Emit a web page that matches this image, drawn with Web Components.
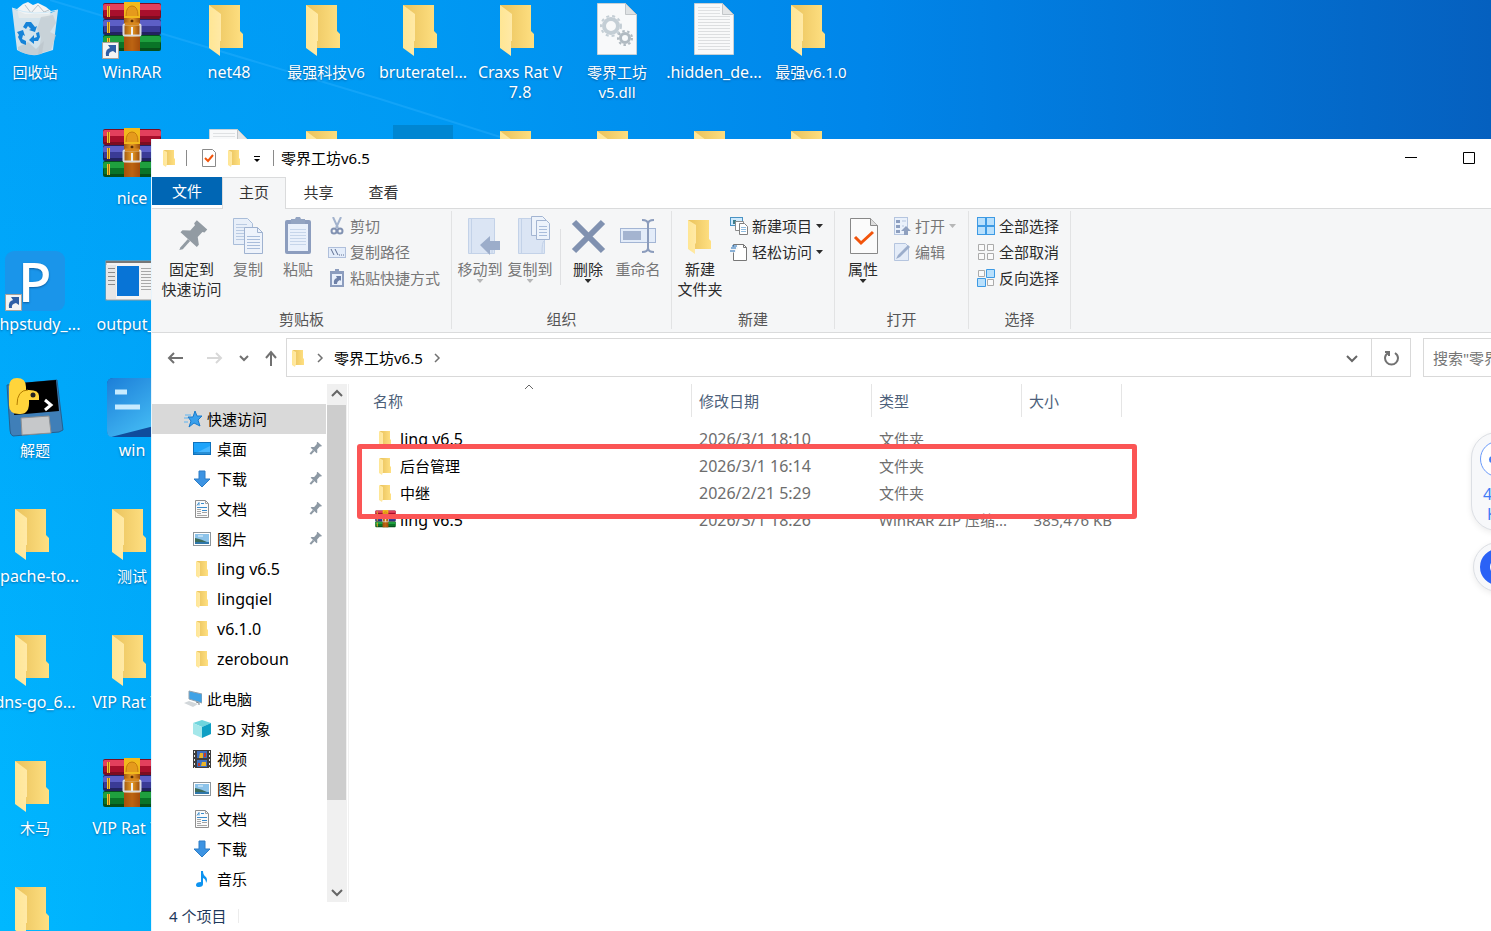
<!DOCTYPE html>
<html lang="zh-CN">
<head>
<meta charset="utf-8">
<title>零界工坊v6.5</title>
<style>
    html, body {
        height: 100%;
        margin: 0;
    }

    body {
        font: 15px/20px "Noto Sans", "Noto Sans CJK SC", sans-serif;
        color: #000;
        overflow: hidden;
    }
</style>
</head>
<body>
<desk-top>
    <desk-icon icon="recycle">回收站</desk-icon>
    <desk-icon icon="winrar" shortcut latin>WinRAR</desk-icon>
    <desk-icon icon="folder" latin>net48</desk-icon>
    <desk-icon icon="folder">最强科技V6</desk-icon>
    <desk-icon icon="folder" latin>bruteratel...</desk-icon>
    <desk-icon icon="folder" latin>Craxs Rat V<br>7.8</desk-icon>
    <desk-icon icon="dll">零界工坊<br>v5.dll</desk-icon>
    <desk-icon icon="text" latin>.hidden_de...</desk-icon>
    <desk-icon icon="folder">最强v6.1.0</desk-icon>

    <desk-icon></desk-icon>
    <desk-icon icon="winrar" latin>nice</desk-icon>
    <desk-icon icon="text"></desk-icon>
    <desk-icon icon="folder"></desk-icon>
    <desk-icon selected></desk-icon>
    <desk-icon icon="folder"></desk-icon>
    <desk-icon icon="folder"></desk-icon>
    <desk-icon icon="folder"></desk-icon>
    <desk-icon icon="folder"></desk-icon>

    <desk-icon icon="phpstudy" shortcut latin first>phpstudy_...</desk-icon>
    <desk-icon icon="output" latin>output_...</desk-icon>
    <desk-icon icon="python" first>解题</desk-icon>
    <desk-icon icon="win" latin>win</desk-icon>
    <desk-icon icon="folder" latin first>apache-to...</desk-icon>
    <desk-icon icon="folder">测试</desk-icon>
    <desk-icon icon="folder" latin first>dns-go_6...</desk-icon>
    <desk-icon icon="folder" latin>VIP Rat 7...</desk-icon>
    <desk-icon icon="folder" first>木马</desk-icon>
    <desk-icon icon="winrar" latin>VIP Rat 7...</desk-icon>
    <desk-icon icon="folder" first></desk-icon>

    <explorer-window slot="window">
        <title-bar slot="title">零界工坊v6.5</title-bar>
        <ribbon-tabs slot="title"></ribbon-tabs>
        <ribbon-bar slot="ribbon">
            <ribbon-group label="剪贴板" style="--w: 300px; --pad: 8px">
                <ribbon-button big icon="pin" wide>固定到<br>快速访问</ribbon-button>
                <ribbon-button big icon="copy" off>复制</ribbon-button>
                <ribbon-button big icon="paste" off>粘贴</ribbon-button>
                <ribbon-stack>
                    <ribbon-button icon="cut" off>剪切</ribbon-button>
                    <ribbon-button icon="path" off>复制路径</ribbon-button>
                    <ribbon-button icon="pastelink" off>粘贴快捷方式</ribbon-button>
                </ribbon-stack>
            </ribbon-group>
            <ribbon-group label="组织" style="--w: 220px">
                <ribbon-button big icon="moveto" off drop>移动到</ribbon-button>
                <ribbon-button big icon="copyto" off drop>复制到</ribbon-button>
                <ribbon-line></ribbon-line>
                <ribbon-button big icon="delete" drop>删除</ribbon-button>
                <ribbon-button big icon="rename" off>重命名</ribbon-button>
            </ribbon-group>
            <ribbon-group label="新建" style="--w: 163px">
                <ribbon-button big icon="bigfolder">新建<br>文件夹</ribbon-button>
                <ribbon-stack>
                    <ribbon-button icon="newitem" drop>新建项目</ribbon-button>
                    <ribbon-button icon="easy" drop>轻松访问</ribbon-button>
                </ribbon-stack>
            </ribbon-group>
            <ribbon-group label="打开" style="--w: 134px">
                <ribbon-button big icon="props" drop>属性</ribbon-button>
                <ribbon-stack>
                    <ribbon-button icon="open" off drop>打开</ribbon-button>
                    <ribbon-button icon="edit" off>编辑</ribbon-button>
                </ribbon-stack>
            </ribbon-group>
            <ribbon-group label="选择" style="--w: 102px">
                <ribbon-stack>
                    <ribbon-button icon="selall">全部选择</ribbon-button>
                    <ribbon-button icon="selnone">全部取消</ribbon-button>
                    <ribbon-button icon="selinv">反向选择</ribbon-button>
                </ribbon-stack>
            </ribbon-group>
        </ribbon-bar>
        <address-bar slot="address" path="零界工坊v6.5"></address-bar>
        <nav-tree slot="nav">
            <nav-item icon="star" root selected>快速访问</nav-item>
            <nav-item icon="desktop" pinned>桌面</nav-item>
            <nav-item icon="download" pinned>下载</nav-item>
            <nav-item icon="doc" pinned>文档</nav-item>
            <nav-item icon="picture" pinned>图片</nav-item>
            <nav-item icon="smallfolder" latin>ling v6.5</nav-item>
            <nav-item icon="smallfolder" latin>lingqiel</nav-item>
            <nav-item icon="smallfolder" latin>v6.1.0</nav-item>
            <nav-item icon="smallfolder" latin>zeroboun</nav-item>
            <nav-item icon="pc" root spaced>此电脑</nav-item>
            <nav-item icon="cube">3D 对象</nav-item>
            <nav-item icon="video">视频</nav-item>
            <nav-item icon="picture">图片</nav-item>
            <nav-item icon="doc">文档</nav-item>
            <nav-item icon="download">下载</nav-item>
            <nav-item icon="music">音乐</nav-item>
        </nav-tree>
        <file-list slot="files"></file-list>
        <span slot="status">4 个项目</span>
    </explorer-window>

    <side-widget slot="widget"></side-widget>
</desk-top>

<script>
const BOOK = (y, a, b, c) => `
    <rect x="1" y="${y}" width="58" height="16" rx="2" fill="${c}"/>
    <rect x="1" y="${y + 1}" width="58" height="7" rx="2" fill="${a}"/>
    <rect x="2" y="${y + 7}" width="56" height="6" fill="${b}"/>
    <rect x="5" y="${y + 3}" width="3" height="11" fill="#f5c52e"/>
    <rect x="6" y="${y + 3}" width="1" height="11" fill="#a86a10"/>`;

const FOLDER_GRADS = `
    <linearGradient id="fb"><stop offset="0" stop-color="#e9c25c"/><stop offset="1" stop-color="#ffe082"/></linearGradient>
    <linearGradient id="ff"><stop offset="0" stop-color="#ffe694"/><stop offset="1" stop-color="#ffe9a6"/></linearGradient>`;

const PAGE_LINES = (x, y, w, n, step, color) =>
    Array.from({ length: n }, (_, i) => `<path d="M${x} ${y + i * step}h${w}" stroke="${color}"/>`).join('');

// name: [viewBox size, markup]
const ICONS = {
    folder: [60, `${FOLDER_GRADS}
        <path d="M10 6h31v26l3 3v14H21z" fill="url(#fb)"/>
        <path d="M10 6l12 9v27h-1v15l-11-8z" fill="url(#ff)"/>`],
    bigfolder: [40, `${FOLDER_GRADS}
        <path d="M8 4h21v19l2 2v8H15z" fill="url(#fb)"/>
        <path d="M8 4l8 5v18l-1 1v10l-7-5z" fill="url(#ff)"/>`],
    smallfolder: [18, `${FOLDER_GRADS}
        <path d="M4 1h10v8l1 1v6H6z" fill="url(#fb)"/>
        <path d="M3 1l4 2v12l-1 3-3-2z" fill="url(#ff)"/>`],
    winrar: [60, `
        ${BOOK(4, '#e2405c', '#a80f2c', '#7c0c20')}
        ${BOOK(20, '#5d5fc6', '#3a3b96', '#22235f')}
        ${BOOK(36, '#1fa03e', '#0a7427', '#064f1a')}
        <linearGradient id="st"><stop offset="0" stop-color="#a35a10"/><stop offset=".5" stop-color="#e89b25"/><stop offset="1" stop-color="#9b4c0c"/></linearGradient>
        <rect x="22" y="3" width="16" height="16" fill="#f2b91c"/>
        <path d="M24 17q0-10 6-10t6 10" fill="#e59a1c" stroke="#c57a0c"/>
        <rect x="22" y="19" width="16" height="33" fill="url(#st)"/>
        <path d="M22 38h16v14H22z" fill="#a94d0b" opacity=".7"/>
        <circle cx="30" cy="22" r="1.500" fill="#5b2b06"/>
        <rect x="21.500" y="25.500" width="17" height="11" rx="1" fill="none" stroke="#d9d9de" stroke-width="2"/>
        <path d="M23 25h14" stroke="#d8871d" stroke-width="3"/>
        <path d="M30 28v8" stroke="#f0f0f0" stroke-width="2"/>`],
    recycle: [60, `
        <path d="M12 10l6-5 5-2 5 3 5-2 8 4 5 4-2 7H14z" fill="#f2f4f5"/>
        <path d="M20 6l6 8 7-8 6 7 5-2" fill="none" stroke="#b9c2c8"/>
        <path d="M7 9l5 42q10 6 20 5l16-5 5-40-10 4H20z" fill="#e3e8eb" opacity=".93"/>
        <path d="M36 18l12-2 3 8-6 9 6 3-5 15-13 4 3-16-4-9z" fill="#c4ccd1" opacity=".75"/>
        <path d="M13 48l10-5 8 7 8-8-2 13-7 1q-10 0-17-5z" fill="#b9c2c8" opacity=".6"/>
        <path d="M7 9q22 9 46 2" fill="none" stroke="#cfe9f7"/>
        <g fill="#1583d8"><path d="M18 28l3-5h5l4 5 2-1-2 6-6-2 2-1-3-3-2 3zM12 33l6-2 2 6-2-1-1 4 4 2v4l-5-2-3-6 1-2zM24 41l5-5v3l3-1-1-4 3-1 1 5-2 4h-4v3z"/></g>`],
    dll: [60, `
        <path d="M10.500 4.500h28l11 11v40h-39z" fill="#f8f9fa" stroke="#c6d0d6"/>
        <path d="M38.500 4.500v11h11z" fill="#dfe2e4" stroke="#c2c6c9"/>
        <circle cx="24" cy="27" r="7" fill="none" stroke="#c4ced5" stroke-width="4"/>
        <circle cx="24" cy="27" r="10" fill="none" stroke="#c4ced5" stroke-width="2" stroke-dasharray="3 3"/>
        <circle cx="38" cy="39" r="4.500" fill="none" stroke="#b1bac1" stroke-width="3"/>
        <circle cx="38" cy="39" r="7" fill="none" stroke="#b1bac1" stroke-width="2" stroke-dasharray="2.500 2.500"/>`],
    text: [60, `
        <path d="M10.500 4.500h28l11 11v40h-39z" fill="#f8f9fa" stroke="#c6d0d6"/>
        ${PAGE_LINES(14, 8.5, 22, 3, 3, '#dfe1e3')}
        ${PAGE_LINES(14, 17.5, 32, 12, 3, '#dcdee0')}
        <path d="M38.500 4.500v11h11z" fill="#e3e5e7" stroke="#c2c6c9"/>`],
    phpstudy: [60, `
        <rect width="60" height="60" rx="9" fill="#1a95ea"/>
        <text x="13" y="51" font-size="55" font-family="Noto Sans" font-weight="500" fill="#fff">P</text>`],
    output: [60, `
        <rect x="4" y="10" width="56" height="39" fill="#f3f3f3" stroke="#999"/>
        <path d="M4 11h56" stroke="#777" stroke-width="2"/>
        <rect x="4" y="14" width="10" height="34" fill="#e6e6e6"/>
        ${PAGE_LINES(6, 17.5, 7, 5, 4, '#8b8b8b')}
        <rect x="15" y="15" width="22" height="30" fill="#0874d6"/>
        ${PAGE_LINES(39, 17.5, 12, 8, 3, '#a8a8a8')}`],
    python: [60, `
        <path d="M2 8l50-5 6 50-4 2-46 4q-3-1-3-6z" fill="#3f7fb8" stroke="#25608f"/>
        <path d="M15 6l36-3 3 31-45 4z" fill="#000"/>
        <path d="M16 41l28-2 2 17-29 2z" fill="#c6c8ca" stroke="#8f9193"/>
        <path d="M4 10q0-9 8-9 9 0 9 9v3q13-1 13 6v4h-10q1 15-10 14-10 0-10-9z" fill="#ffd43b"/>
        <path d="M12 28q0-15 11-15" fill="none" stroke="#b37c00"/>
        <circle cx="28" cy="18" r="2.500" fill="#222"/>
        <path d="M40 23l6 5-6 5" fill="none" stroke="#fff" stroke-width="3"/>`],
    win: [60, `
        <linearGradient id="w" x2=".7" y2="1"><stop offset="0" stop-color="#1c7ed8"/><stop offset="1" stop-color="#45bdf5"/></linearGradient>
        <rect x="5" y="1" width="59" height="59" rx="6" fill="#0f4c9c"/>
        <path d="M11 1h49v46L9 60q-4-1-4-6V7q0-6 6-6z" fill="url(#w)"/>
        <path d="M13 15h12M13 30h25" stroke="#c6ebff" stroke-width="5"/>`],

    pin: [40, `<g transform="rotate(42 20 20)" fill="#929ba3"><path d="M13 5h14v4l-2 1v7l6 5v3H9v-3l6-5v-7l-2-1z"/><path d="M19 25h3v11l-2 3-1-3z"/></g>`],
    copy: [40, `
        <g fill="#e8eff9" stroke="#a9bdd9"><path d="M5.500 2.500h14l5 5v21h-19z"/></g>
        ${PAGE_LINES(8, 8.5, 11, 6, 3, '#b9cae2')}
        <path d="M16.500 11.500h13l5 5v21h-18z" fill="#eef3fb" stroke="#9fb2d0"/>
        <path d="M29.500 11.500v5h5" fill="none" stroke="#9fb2d0"/>
        ${PAGE_LINES(19, 20.5, 13, 5, 3, '#a9bddb')}`],
    paste: [40, `
        <rect x="7" y="4" width="26" height="34" rx="2" fill="#8c9dbe"/>
        <path d="M10 8h20v27H10z" fill="#e9f0fb"/>
        <path d="M13 3h4l1-2h4l1 2h4v5H13z" fill="#93a4c2"/>
        ${PAGE_LINES(12, 13.5, 16, 6, 3, '#c6d5ea')}`],
    moveto: [40, `
        <path d="M8.500 2.500h26v35h-26z" fill="#dbe5f4" stroke="#c3d2e8"/><path d="M11.500 3v34M32 37q0-11 2-12" fill="none" stroke="#c3d2e8"/>
        <path d="M20 29l10-9v5h10v9H30v5z" fill="#9cadca"/>`],
    copyto: [40, `
        <path d="M8.500 2.500h26v35h-26z" fill="#dbe5f4" stroke="#c3d2e8"/><path d="M11.500 3v34M32 37q0-11 2-12" fill="none" stroke="#c3d2e8"/>
        <path d="M21.500.5h11l4 4v15h-15z" fill="#edf3fb" stroke="#a3b5d2"/>
        <path d="M26.500 4.500h10l3 3v16h-13z" fill="#edf3fb" stroke="#a3b5d2"/>
        ${PAGE_LINES(29, 10.5, 8, 4, 3, '#a9bddb')}`],
    delete: [40, `<path d="M6 6l29 29M35 6L6 35" stroke="#8091b0" stroke-width="6"/>`],
    rename: [40, `
        <rect x="2.500" y="12.500" width="35" height="14" fill="#e3ecf9" stroke="#a3b5d4"/>
        <rect x="5" y="15" width="18" height="9" fill="#a4b4d0"/>
        <path d="M24 4q6 0 6 4 0-4 6-4M30 7v26M24 36q6 0 6-4 0 4 6 4" fill="none" stroke="#8b9cbc" stroke-width="2"/>`],
    props: [40, `
        <path d="M7.500 2.500h20l7 7v28h-27z" fill="#fbfbfb" stroke="#888"/>
        <path d="M27.500 2.500v7h7" fill="#ddd" stroke="#888"/>
        <path d="M12 21l6 6 12-11" fill="none" stroke="#f2540b" stroke-width="3"/>`],

    cut: [18, `<path d="M5 0l5 11M13 0L8 11" stroke="#a3b3cd" stroke-width="2" fill="none"/><g fill="none" stroke="#8292b2" stroke-width="2"><circle cx="6" cy="14" r="2.500"/><circle cx="12" cy="14" r="2.500"/></g>`],
    path: [18, `<rect x=".5" y="4.500" width="17" height="10" fill="#e4edfa" stroke="#afbfdb"/><path d="M3 6l3 6M7 6l3 6" stroke="#5e6f93"/><path d="M11 12h1M13 12h1M15 12h1" stroke="#5e6f93"/>`],
    pastelink: [18, `<rect x="2" y="2" width="14" height="16" fill="#8c9dbe"/><path d="M4 5h10v11H4z" fill="#e9f0fb"/><path d="M7 0h4v2h2v2H5V2h2z" fill="#8c9dbe"/><path d="M6 15q-1-5 3-6L8 7h5v5l-1-1q-3 1-3 4z" fill="#6e81a8"/>`],
    newitem: [18, `<rect x=".5" y=".5" width="12" height="8" fill="#cfeafd" stroke="#4a93c4"/><path d="M3 3h3v4H3z" fill="#3e7f8c"/><path d="M5.500 4.500h8v9h-8z" fill="#fff" stroke="#8c8c8c"/><path d="M9.500 6.500h5l3 3v8h-8z" fill="#fff" stroke="#808080"/>${PAGE_LINES(11, 10.5, 5, 3, 2, '#8fbce0')}`],
    easy: [18, `<path d="M3.500 1.500h10l3 3v13h-13z" fill="#fff" stroke="#777"/><path d="M13.500 1.500v3h3" fill="none" stroke="#777"/><path d="M1 5h7M0 8h6" stroke="#f5f6f7" stroke-width="3"/><path d="M2 3h5M1 5h5M0 8h5" stroke="#1d6bb5"/>`],
    open: [18, `<rect x="1.500" y=".5" width="13" height="17" fill="#eaf1fb" stroke="#b5c5df"/><path d="M3 3h4v3H3zM3 8h4v3H3zM3 13h4v3H3z" fill="#8d9fc0"/><path d="M9 4h4M9 9h2" stroke="#b5c5df"/><path d="M13 9l5 5h-3v4h-4v-4H8z" fill="#8fa0bf"/>`],
    edit: [18, `<path d="M1.500.500h11l3 3v14h-14z" fill="#e4ecf8" stroke="#b5c5df"/><path d="M3 16l2-4L15 2l2 2L7 14z" fill="#9badcb"/>`],
    selall: [18, `<path d="M0 0h18v18H0z" fill="#3d9ae4"/><path d="M1 1h7v7H1zM10 1h7v7h-7zM1 10h7v7H1zM10 10h7v7h-7z" fill="#b9e0fc"/>`],
    selnone: [18, `<g fill="#fafafa" stroke="#ababab"><path d="M1.500 1.500h6v6h-6zM10.500 1.500h6v6h-6zM1.500 10.500h6v6h-6zM10.500 10.500h6v6h-6z"/></g>`],
    selinv: [18, `<g fill="#fafafa" stroke="#ababab"><path d="M1.500 1.500h6v6h-6zM10.500 10.500h6v6h-6z"/></g><g fill="#b9e0fc" stroke="#3d9ae4"><path d="M9.500.500h8v8h-8zM.5 9.500h8v8h-8z"/></g>`],
    check: [18, `<path d="M2.500.500h10l3 3v14h-13z" fill="#fff" stroke="#8a8a8a"/><path d="M5 9l3 3 5-6" fill="none" stroke="#f2540b" stroke-width="2"/>`],

    star: [18, `<path d="M11 1l2 5h5l-4 4 2 6-6-3-5 4 2-6-3-4h5z" fill="#3aa0ec" stroke="#1a7bcc"/><path d="M1 5h6M0 8h4M0 12h4" stroke="#5fb4f2"/>`],
    desktop: [18, `<rect x=".5" y="2.500" width="17" height="12" fill="#1ea4fb" stroke="#0f72bd"/><path d="M1 14L17 6v8z" fill="#48b7ff"/><path d="M1 13h16" stroke="#0b67ab"/>`],
    download: [18, `<path d="M6 1h6v8h5l-8 8-8-8h5z" fill="#3c93e2" stroke="#2c7cc6"/>`],
    doc: [18, `<path d="M2.500.500h10l3 3v14h-13z" fill="#fafafa" stroke="#8f8f8f"/><path d="M4 5.500l2-3v3M8 3.500h3M4 7.500h10M9 10.500h5" stroke="#3a8ccc" fill="none"/><path d="M12.500.500v3h3M4 9.500h4M4 11.500h4M9 12.500h5M4 13.500h4M4 15.500h10" fill="none" stroke="#a5a5a5"/>`],
    picture: [18, `<rect x=".5" y="2.500" width="17" height="13" fill="#fff" stroke="#8f979d"/><path d="M2 4h14v10H2z" fill="#8cc3ea"/><path d="M2 8q6 1 14 5v1H2z" fill="#3c6b5a"/><path d="M2 12h14v2H2z" fill="#2f77aa"/><path d="M5 6h5" stroke="#e9f5fc"/>`],
    pc: [18, `<path d="M5 1l13 3v9L5 9z" fill="#3fa2e6" stroke="#93a2ad"/><path d="M0 13l5-2 9 3-5 3z" fill="#d2d7da"/><path d="M12 12l3 1v2" stroke="#7f8990" fill="none"/>`],
    cube: [18, `<path d="M9 0l9 3-9 4-9-4z" fill="#6fd5dd"/><path d="M0 3l9 4v11l-9-4z" fill="#a4e7ea"/><path d="M18 3L9 7v11l9-4z" fill="#0e9fc4"/>`],
    video: [18, `<path d="M0 0h18v18H0z" fill="#3d3d3d"/><path d="M4 1h10v7H4zM4 10h10v7H4z" fill="#3d6fc0"/><path d="M7 3h3v5H6zM9 12h4v4H8z" fill="#e9b428"/><path d="M11 3h2v4h-2zM5 13h2v3H5z" fill="#c63a2b"/><path d="M1.500 1v17M16.500 1v17" stroke="#e8e8e8" stroke-dasharray="2 2"/>`],
    music: [18, `<path d="M8 1h2q0 4 3 6 2 3 0 6 0-4-3-5v6q0 3-4 3-3 0-3-2 0-3 5-3z" fill="#0d93f0"/>`],
    thumbpin: [14, `<g transform="rotate(42 7 7)" fill="#8d99a4"><path d="M4 0h6v1L9 2v4l2 2v1H3V8l2-2V2L4 1z"/><path d="M6 9h2v5H6z"/></g>`],

    back: [18, `<path d="M16 9H2M7 4L2 9l5 5" fill="none" stroke="#717171" stroke-width="2"/>`],
    forward: [18, `<path d="M2 9h14M11 4l5 5-5 5" fill="none" stroke="#d8d8d8" stroke-width="2"/>`],
    up: [18, `<path d="M9 17V3M4 9l5-6 5 6" fill="none" stroke="#717171" stroke-width="2"/>`],
    down: [12, `<path d="M2 4l4 4 4-4" fill="none" stroke="#717171" stroke-width="2"/>`],
    bigdown: [14, `<path d="M2 5l5 5 5-5" fill="none" stroke="#666" stroke-width="2"/>`],
    right: [12, `<path d="M4 2l4 4-4 4" fill="none" stroke="#717171" stroke-width="1.500"/>`],
    refresh: [18, `<path d="M13 4q3 2 3 5a6 6 0 0 1-13 0q0-3 3-5M3 3h4v4" fill="none" stroke="#717171" stroke-width="2"/>`],
    minimize: [12, `<path d="M0 5.500h12" stroke="#000"/>`],
    maximize: [12, `<path d="M.5.500h11v11H.5z" fill="none" stroke="#000"/>`],
    qat: [8, `<path d="M1 1.500h6" stroke="#000"/><path d="M1 4h6L4 7z"/>`]
};

function icon(name, size) {
    if (!name) return '';
    const [box, body] = ICONS[name];
    const px = size || box;
    return `<svg width="${px}" height="${px}" viewBox="0 0 ${box} ${box}" aria-hidden="true">${body}</svg>`;
}

// flat buttons look the same everywhere in the window
const BASE = `
    :host, * { box-sizing: border-box; }
    svg { display: block; flex: none; }
    button {
        margin: 0;
        padding: 0;
        border: 0;
        background: none;
        color: inherit;
        font: inherit;
    }
`;

class BaseElement extends HTMLElement {
    constructor() {
        super();
        this.attachShadow({ mode: 'open' });
    }

    connectedCallback() {
        this.shadowRoot.innerHTML = `<style>${BASE}${this.styles()}</style>${this.render()}`;
    }

    styles() { return ''; }
    render() { return '<slot></slot>'; }
}

class DeskTop extends BaseElement {
    styles() {
        return `
        :host {
            display: block;
            position: relative;
            height: 100vh;
            overflow: hidden;
            background:
                linear-gradient(to right, rgba(0, 152, 242, 0) 0, rgba(0, 150, 241, .7) 28%, #0086ea 58%, #0560bf 100%),
                linear-gradient(#00a0f8, #00b8ff);
        }
        .light {
            position: absolute;
            inset: 0;
            width: 100%;
            height: 100%;
        }
        .icons {
            position: relative;
            display: grid;
            grid-template-columns: repeat(9, 97px);
            grid-auto-rows: 126px;
            margin: -1px 0 0 -14px;
        }`;
    }

    render() {
        return `
        <svg class="light"><path d="M50 0L183 40 380 99 510 140" fill="none" stroke="#35b4ff" stroke-width="2" opacity=".35"/></svg>
        <div class="icons"><slot></slot></div>
        <slot name="window"></slot>
        <slot name="widget"></slot>`;
    }
}

class DeskIcon extends BaseElement {
    styles() {
        return `
        :host {
            display: flex;
            flex-direction: column;
            align-items: center;
            gap: 3px;
            padding-left: 1px;
            color: #fff;
            text-align: center;
            white-space: nowrap;
            text-shadow: 0 1px 2px rgba(0, 40, 90, .5);
        }
        :host([latin]) { font-size: 16px; }
        :host([first]) { grid-column: 1; }
        .pic {
            position: relative;
            width: 60px;
            height: 60px;
        }
        :host([selected]) .pic { background: #0086d2; }
        .arrow {
            position: absolute;
            left: 0;
            bottom: 0;
        }`;
    }

    render() {
        const arrow = this.hasAttribute('shortcut')
            ? `<svg class="arrow" width="17" height="17"><path d="M.5.500h16v16H.5z" fill="#f4f4f4" stroke="#a9a29a"/><path d="M4 14q-1-7 4-8L6 3h8v8l-3-2q-5 1-4 5z" fill="#2f5fa5"/></svg>`
            : '';
        return `<div class="pic">${icon(this.getAttribute('icon'))}${arrow}</div><div><slot></slot></div>`;
    }
}

class ExplorerWindow extends BaseElement {
    styles() {
        return `
        :host {
            position: absolute;
            left: 151px;
            right: -65px;
            top: 139px;
            bottom: 0;
            display: flex;
            flex-direction: column;
            border-left: 1px solid #e6f4fd;
            background: #fff;
        }
        .body {
            display: flex;
            flex: 1;
            min-height: 0;
        }
        .status {
            display: flex;
            align-items: center;
            height: 29px;
            padding: 0 0 2px 17px;
            color: #1e395b;
        }
        .status::after {
            content: "";
            width: 1px;
            height: 14px;
            margin-left: 12px;
            background: #ececec;
        }`;
    }

    render() {
        return `
        <slot name="title"></slot>
        <slot name="ribbon"></slot>
        <slot name="address"></slot>
        <div class="body"><slot name="nav"></slot><slot name="files"></slot></div>
        <div class="status"><slot name="status"></slot></div>`;
    }
}

class TitleBar extends BaseElement {
    styles() {
        return `
        :host {
            display: flex;
            align-items: center;
            height: 38px;
            padding-left: 8px;
        }
        .quick {
            display: flex;
            align-items: center;
            gap: 7px;
            margin: 0 9px 0 13px;
        }
        .quick button:last-child { padding: 2px 3px 0; }
        i {
            width: 1px;
            height: 16px;
            background: #8a8a8a;
        }
        i:first-of-type { margin-left: 8px; }
        .name {
            flex: 1;
            padding-left: 7px;
        }
        .control {
            display: flex;
            align-items: center;
            justify-content: center;
            width: 58px;
            height: 38px;
        }`;
    }

    render() {
        return `
        ${icon('smallfolder')}<i></i>
        <div class="quick">
            <button aria-label="属性">${icon('check')}</button>
            <button aria-label="新建文件夹">${icon('smallfolder')}</button>
            <button aria-label="自定义">${icon('qat')}</button>
        </div><i></i>
        <div class="name"><slot></slot></div>
        <button class="control" aria-label="最小化">${icon('minimize')}</button>
        <button class="control" aria-label="最大化">${icon('maximize')}</button>
        <button class="control" aria-label="关闭"></button>`;
    }
}

class RibbonTabs extends BaseElement {
    styles() {
        return `
        :host {
            display: flex;
            height: 32px;
            border-bottom: 1px solid #dadbdc;
            color: #333;
        }
        button {
            width: 65px;
            height: 30px;
        }
        .file {
            width: 70px;
            height: 28px;
            background: #0066b4;
            color: #fff;
        }
        .active {
            width: 64px;
            height: 32px;
            padding-bottom: 3px;
            border: 1px solid #dadbdc;
            border-bottom: 0;
            background: #f5f6f7;
        }`;
    }

    render() {
        return `
        <button class="file">文件</button>
        <button class="active">主页</button>
        <button>共享</button>
        <button>查看</button>`;
    }
}

class RibbonBar extends BaseElement {
    styles() {
        return `
        :host {
            display: flex;
            height: 124px;
            border-bottom: 1px solid #dadbdc;
            background: #f5f6f7;
        }`;
    }
}

class RibbonGroup extends BaseElement {
    styles() {
        return `
        :host {
            display: flex;
            flex-direction: column;
            width: var(--w);
            margin: 2px 0 3px;
            border-right: 1px solid #e2e3e4;
        }
        .row {
            display: flex;
            flex: 1;
            padding: 2px 0 0 var(--pad, 3px);
        }
        .label {
            text-align: center;
            color: #555;
        }`;
    }

    render() {
        return `<div class="row"><slot></slot></div><div class="label">${this.getAttribute('label')}</div>`;
    }
}

class RibbonStack extends BaseElement {
    styles() {
        return `
        :host {
            display: flex;
            flex-direction: column;
            margin-left: 5px;
        }`;
    }
}

class RibbonLine extends BaseElement {
    styles() {
        return `
        :host {
            width: 1px;
            height: 56px;
            margin: 16px 2px 0 5px;
            background: #dfe0e2;
        }`;
    }
}

class RibbonButton extends BaseElement {
    styles() {
        return `
        :host { display: block; color: #2b2b2b; }
        :host([off]) { color: #777; }
        button {
            display: flex;
            align-items: center;
            gap: 4px;
            height: 26px;
            white-space: nowrap;
        }
        :host([big]) button {
            flex-direction: column;
            gap: 3px;
            width: 50px;
            height: auto;
            padding-top: 3px;
        }
        :host([wide]) button { width: 63px; }
        .caret {
            width: 7px;
            height: 4px;
            background: currentColor;
            clip-path: polygon(0 0, 100% 0, 50% 100%);
        }
        :host([off]) .caret { opacity: .5; }
        :host([big]) .caret { margin-top: -3px; }`;
    }

    render() {
        const caret = this.hasAttribute('drop') ? '<span class="caret"></span>' : '';
        return `<button>${icon(this.getAttribute('icon'))}<span><slot></slot></span>${caret}</button>`;
    }
}

class AddressBar extends BaseElement {
    styles() {
        return `
        :host {
            display: flex;
            padding: 5px 13px 7px 5px;
        }
        button {
            display: flex;
            align-items: center;
            justify-content: center;
            width: 38px;
        }
        .recent { width: 22px; }
        .up { width: 31px; }
        .path {
            display: flex;
            flex: 1;
            align-items: center;
            height: 39px;
            border: 1px solid #d9d9d9;
            padding-left: 2px;
        }
        .path .crumb {
            width: auto;
            padding: 0 8px;
        }
        .path svg + svg { margin-left: 7px; }
        .path .crumb + svg { margin-right: auto; }
        .refresh {
            width: 39px;
            height: 37px;
            border-left: 1px solid #d9d9d9;
        }
        input {
            width: 120px;
            height: 39px;
            margin-left: 12px;
            padding: 0 9px;
            border: 1px solid #d9d9d9;
            font: inherit;
        }
        input::placeholder { color: #757575; }`;
    }

    render() {
        const path = this.getAttribute('path');
        return `
        <button aria-label="后退">${icon('back')}</button>
        <button aria-label="前进">${icon('forward')}</button>
        <button class="recent" aria-label="最近浏览的位置">${icon('down')}</button>
        <button class="up" aria-label="上移">${icon('up')}</button>
        <div class="path">
            ${icon('smallfolder')}${icon('right')}
            <button class="crumb">${path}</button>${icon('right')}
            <button aria-label="上一个位置">${icon('bigdown')}</button>
            <button class="refresh" aria-label="刷新">${icon('refresh')}</button>
        </div>
        <input type="search" aria-label="搜索" placeholder='搜索"${path}"'>`;
    }
}

class NavTree extends BaseElement {
    styles() {
        return `
        :host {
            display: flex;
            flex: none;
            width: 197px;
            border-right: 1px solid #f0f0f0;
        }
        nav {
            flex: 1;
            padding-top: 20px;
            overflow: hidden;
        }
        .scroll {
            display: flex;
            flex-direction: column;
            width: 20px;
            margin: 0 1px;
            background: #f0f0f0;
        }
        .scroll button {
            display: flex;
            align-items: center;
            justify-content: center;
            height: 21px;
        }
        .scroll .top { transform: rotate(180deg); }
        .track { flex: 1; }
        .thumb {
            width: 19px;
            height: 83%;
            background: #cdcdcd;
        }`;
    }

    render() {
        return `
        <nav><slot></slot></nav>
        <div class="scroll">
            <button class="top" aria-label="向上">${icon('bigdown')}</button>
            <div class="track"><div class="thumb"></div></div>
            <button aria-label="向下">${icon('bigdown')}</button>
        </div>`;
    }
}

class NavItem extends BaseElement {
    styles() {
        return `
        :host { display: block; }
        :host([spaced]) { margin-top: 10px; }
        :host([latin]) { font-size: 16px; }
        a {
            display: flex;
            align-items: center;
            gap: 6px;
            height: 30px;
            padding: 0 4px 0 41px;
            color: #000;
            text-decoration: none;
        }
        :host([root]) a {
            gap: 5px;
            padding-left: 32px;
        }
        :host([selected]) a { background: #d9d9d9; }
        span { flex: 1; }`;
    }

    render() {
        const pin = this.hasAttribute('pinned') ? icon('thumbpin') : '';
        return `<a href="#">${icon(this.getAttribute('icon'))}<span><slot></slot></span>${pin}</a>`;
    }
}

class FileList extends BaseElement {
    constructor() {
        super();
        this.files = [
            ['smallfolder', 'ling v6.5', '2026/3/1 18:10', '文件夹', ''],
            ['smallfolder', '后台管理', '2026/3/1 16:14', '文件夹', ''],
            ['smallfolder', '中继', '2026/2/21 5:29', '文件夹', ''],
            ['winrar', 'ling v6.5', '2026/3/1 18:26', 'WinRAR ZIP 压缩...', '385,476 KB']
        ];
    }

    styles() {
        return `
        :host {
            display: block;
            position: relative;
            flex: 1;
            padding-left: 17px;
        }
        table {
            width: 756px;
            table-layout: fixed;
            border-collapse: separate;
            border-spacing: 0;
        }
        .name { width: 326px; }
        .date { width: 180px; }
        .type { width: 150px; }
        th {
            position: relative;
            height: 33px;
            padding: 0 7px;
            border-right: 1px solid #e5e5e5;
            color: #4c607a;
            font-weight: 400;
            text-align: left;
        }
        th svg {
            position: absolute;
            top: 0;
            left: calc(50% - 5px);
        }
        tbody::before {
            content: "";
            display: block;
            height: 8px;
        }
        td {
            height: 27px;
            padding: 0 7px;
            color: #6d6d6d;
            white-space: nowrap;
        }
        td:first-child { color: #000; }
        td:nth-child(2) { font-size: 16px; }
        td:last-child {
            padding-right: 10px;
            text-align: right;
        }
        .file {
            display: flex;
            align-items: center;
        }
        .file.latin { font-size: 16px; }
        .pic {
            display: flex;
            justify-content: center;
            width: 24px;
            margin-right: 3px;
        }
        .mark {
            position: absolute;
            left: 8px;
            top: 60px;
            width: 780px;
            height: 75px;
            border: 5px solid #fb5555;
            border-radius: 3px;
        }`;
    }

    render() {
        const rows = this.files.map(([pic, name, date, type, size]) => `
            <tr>
                <td><div class="file ${/^[ -~]+$/.test(name) ? 'latin' : ''}"><span class="pic">${icon(pic, pic === 'winrar' ? 21 : 18)}</span>${name}</div></td>
                <td>${date}</td>
                <td>${type}</td>
                <td>${size}</td>
            </tr>`).join('');
        return `
        <table>
            <thead>
                <tr>
                    <th class="name">名称<svg width="10" height="6"><path d="M1 5l4-4 4 4" fill="none" stroke="#666"/></svg></th>
                    <th class="date">修改日期</th>
                    <th class="type">类型</th>
                    <th>大小</th>
                </tr>
            </thead>
            <tbody>${rows}</tbody>
        </table>
        <div class="mark"></div>`;
    }
}

// floating meter that hangs over the right edge of the screen
class SideWidget extends BaseElement {
    styles() {
        return `
        :host {
            position: absolute;
            right: -32px;
            top: 432px;
            display: flex;
            flex-direction: column;
            align-items: flex-end;
            gap: 11px;
            color: #3f7cf6;
            font-size: 16px;
        }
        .meter, .ball {
            border: 1px solid #dcdfe4;
            background: #f7f8fa;
            box-shadow: 0 2px 6px rgba(0, 0, 0, .08);
        }
        .meter {
            width: 52px;
            height: 99px;
            padding: 8px;
            border-radius: 26px;
        }
        .ring {
            display: flex;
            align-items: center;
            justify-content: center;
            width: 36px;
            height: 36px;
            margin-bottom: 7px;
            border: 1px solid #6b9bfa;
            border-radius: 50%;
            background: #fff;
        }
        .ring::before {
            content: "";
            width: 18px;
            height: 7px;
            border-radius: 4px;
            background: #3f7cf6;
        }
        .value { padding-left: 3px; }
        .unit { padding-left: 7px; }
        .ball {
            width: 50px;
            height: 50px;
            padding: 6px;
            border-radius: 50%;
        }
        .ball div {
            width: 36px;
            height: 36px;
            border: 10px solid #2b62f6;
            border-radius: 50%;
            background: #fff;
        }`;
    }

    render() {
        return `
        <div class="meter"><div class="ring"></div><div class="value">4</div><div class="unit">K</div></div>
        <div class="ball"><div></div></div>`;
    }
}

customElements.define('desk-top', DeskTop);
customElements.define('desk-icon', DeskIcon);
customElements.define('explorer-window', ExplorerWindow);
customElements.define('title-bar', TitleBar);
customElements.define('ribbon-tabs', RibbonTabs);
customElements.define('ribbon-bar', RibbonBar);
customElements.define('ribbon-group', RibbonGroup);
customElements.define('ribbon-stack', RibbonStack);
customElements.define('ribbon-line', RibbonLine);
customElements.define('ribbon-button', RibbonButton);
customElements.define('address-bar', AddressBar);
customElements.define('nav-tree', NavTree);
customElements.define('nav-item', NavItem);
customElements.define('file-list', FileList);
customElements.define('side-widget', SideWidget);
</script>
</body>
</html>
